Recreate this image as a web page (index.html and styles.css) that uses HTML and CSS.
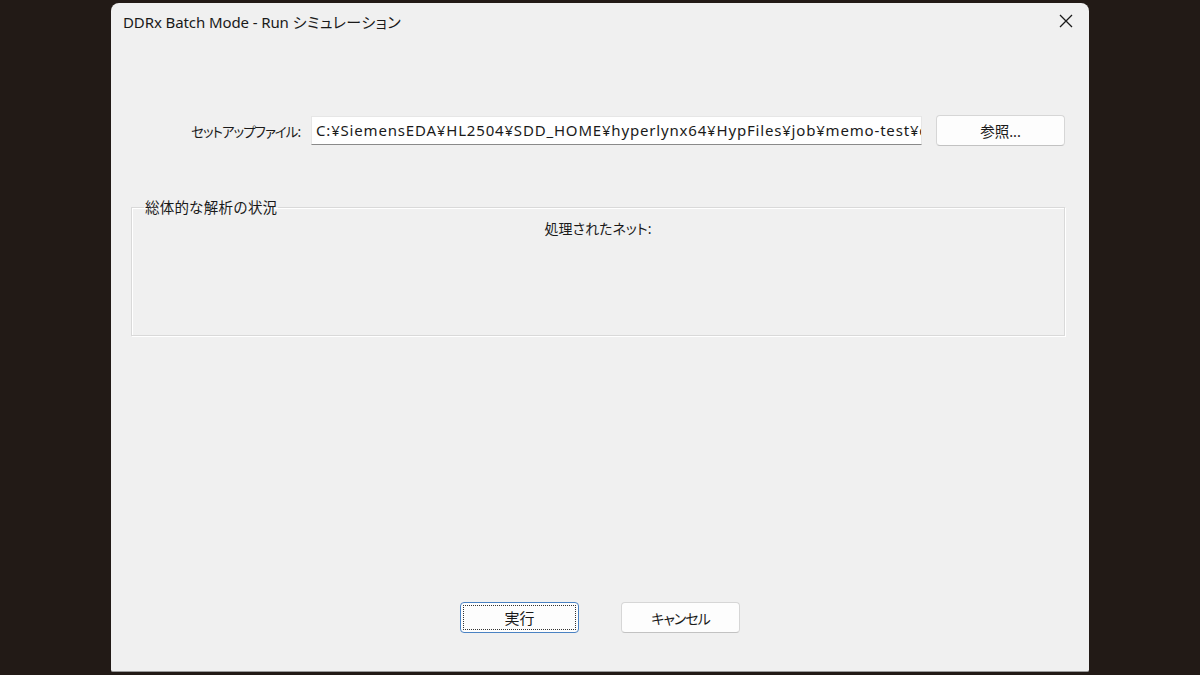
FILE: index.html
```html
<!DOCTYPE html>
<html lang="ja">
<head>
<meta charset="utf-8">
<title>DDRx Batch Mode - Run シミュレーション</title>
<link rel="stylesheet" href="styles.css">
</head>
<body>
<div class="dialog">
  <div class="titlebar">
    <span class="title">DDRx Batch Mode - Run <span class="jp-title">シミュレーション</span></span>
    <span class="close" aria-label="閉じる">
      <svg width="14" height="14" viewBox="0 0 14 14"><path d="M1 1 L13 13 M13 1 L1 13" stroke="#1a1a1a" stroke-width="1.3" fill="none"/></svg>
    </span>
  </div>
  <div class="content">
    <div class="setup-row">
      <label class="setup-label">セットアップファイル:</label>
      <div class="path-input">C:¥SiemensEDA¥HL2504¥SDD_HOME¥hyperlynx64¥HypFiles¥job¥memo-test¥ddrx</div>
      <button class="btn browse">参照...</button>
    </div>
    <fieldset class="group">
      <legend>総体的な解析の状況</legend>
      <div class="processed">処理されたネット:</div>
    </fieldset>
    <div class="spacer"></div>
    <div class="actions">
      <button class="btn action default"><span class="focus">実行</span></button>
      <button class="btn action cancel">キャンセル</button>
    </div>
  </div>
</div>
</body>
</html>
```

FILE: styles.css
```css
html, body {
  margin: 0;
  padding: 0;
}
body {
  width: 1200px;
  height: 675px;
  background: #221a16;
  overflow: hidden;
  font-family: "Noto Sans", "Noto Sans CJK JP", sans-serif;
  color: #1a1a1a;
}
.dialog {
  margin-left: 111px;
  margin-top: 3px;
  width: 978px;
  height: 669px;
  background: #f0f0f0;
  border-radius: 8px 8px 2px 2px;
  border-bottom: 1px solid #9a9a9a;
  display: flex;
  flex-direction: column;
  box-sizing: border-box;
}
.titlebar {
  height: 36px;
  display: flex;
  align-items: center;
  justify-content: space-between;
  padding: 0 16px 0 12px;
  flex: none;
}
.title {
  font-size: 15px;
  color: #1a1a1a;
  letter-spacing: -0.1px;
}
.jp-title {
  font-feature-settings: "palt";
  letter-spacing: 0.5px;
}
.close {
  display: flex;
  width: 14px;
  height: 14px;
}
.content {
  flex: 1;
  display: flex;
  flex-direction: column;
  padding: 76px 24px 38px 20px;
}
.setup-row {
  display: flex;
  align-items: center;
  height: 31px;
}
.setup-label {
  width: 169px;
  text-align: right;
  font-size: 13.5px;
  font-feature-settings: "palt";
  letter-spacing: -1px;
  flex: none;
}
.path-input {
  margin-left: 11px;
  width: 611px;
  height: 29px;
  box-sizing: border-box;
  background: #fff;
  border: 1px solid #e6e6e6;
  border-bottom: 1px solid #8a8a8a;
  font-size: 15px;
  letter-spacing: 0.82px;
  line-height: 27px;
  padding-left: 4px;
  white-space: nowrap;
  overflow: hidden;
  flex: none;
}
.btn {
  font-family: "Noto Sans", "Noto Sans CJK JP", sans-serif;
  background: #fdfdfd;
  border: 1px solid #d6d6d6;
  border-bottom-color: #c2c2c2;
  border-radius: 4px;
  color: #1a1a1a;
  font-size: 14.5px;
  padding: 0;
}
.browse {
  margin-left: 14px;
  width: 129px;
  height: 31px;
  flex: none;
}
.group {
  margin: 53px 0 0 0;
  padding: 0;
  height: 137px;
  box-sizing: border-box;
  border: 1px solid #d9d9d9;
  box-shadow: inset 1px 1px 0 #fff, 1px 1px 0 #fff;
  border-radius: 0;
}
.group legend {
  margin-left: 12px;
  padding: 0 1px;
  font-size: 14.5px;
  line-height: 16px;
  letter-spacing: 0.2px;
}
.processed {
  text-align: center;
  font-size: 14px;
  font-feature-settings: "palt";
  margin-top: 3px;
}
.spacer {
  flex: 1;
}
.actions {
  display: flex;
  justify-content: center;
  gap: 42px;
  padding-left: 4px;
}
.action {
  width: 119px;
  height: 31px;
  font-size: 15px;
}
.cancel {
  font-size: 14px;
  font-feature-settings: "palt";
  letter-spacing: -1px;
}
.action.default {
  border: 1px solid #4a82c3;
  border-radius: 4px;
  padding: 2px;
  display: flex;
}
.focus {
  flex: 1;
  border: 1px dotted #333;
  display: flex;
  align-items: center;
  justify-content: center;
}
```
